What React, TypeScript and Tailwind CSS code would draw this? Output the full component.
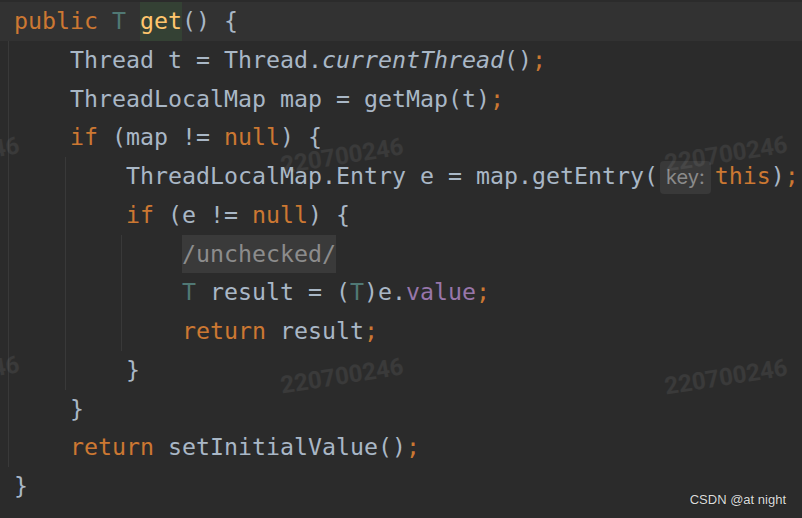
import type { ReactNode } from "react"

const Line = ({ children, className = "" }: { children?: ReactNode; className?: string }) => (
    <div className={`h-[38.75px] leading-[38.75px] whitespace-pre ${className}`}>{children}</div>
)

const Kw = ({ children }: { children: ReactNode }) => <span className="text-[#cc7832]">{children}</span>
const Tp = ({ children }: { children: ReactNode }) => <span className="text-[#507874]">{children}</span>

const Watermark = ({ className }: { className: string }) => (
    <div
        className={`pointer-events-none absolute w-[130px] text-center leading-[30px] font-['Roboto',sans-serif] text-[24px] font-bold text-white/[0.07] -rotate-[9deg] ${className}`}
    >
        220700246
    </div>
)

export default function App() {
    return (
        <div className="relative w-[802px] h-[518px] overflow-hidden bg-[#2b2b2b] pt-[2px] font-['DejaVu_Sans_Mono',monospace] text-[23.25px] text-[#a9b7c6]">
            <Line className="bg-[#323232] pl-[14px]">
                <Kw>public</Kw> <Tp>T</Tp> <span className="inline-block bg-[#344134] text-[#ffc66d]">get</span>() {"{"}
            </Line>
            <div className="ml-[8px] border-l border-[#393939] pl-[61px]">
                <Line>
                    Thread t = Thread.<span className="italic">currentThread</span>()<Kw>;</Kw>
                </Line>
                <Line>
                    ThreadLocalMap map = getMap(t)<Kw>;</Kw>
                </Line>
                <Line>
                    <Kw>if</Kw> (map != <Kw>null</Kw>) {"{"}
                </Line>
                <div className="-ml-[5px] border-l border-[#393939] pl-[60px]">
                    <Line>
                        ThreadLocalMap.Entry e = map.getEntry(
                        <span className="ml-[2px] mr-[4px] inline-block h-[33px] rounded-[4px] bg-[#393939] px-[6px] align-middle font-['Inter',sans-serif] text-[20px] leading-[33px] text-[#8a8a8a]">
                            key:
                        </span>
                        <Kw>this</Kw>)<Kw>;</Kw>
                    </Line>
                    <Line>
                        <Kw>if</Kw> (e != <Kw>null</Kw>) {"{"}
                    </Line>
                    <div className="-ml-[5px] border-l border-[#393939] pl-[60px]">
                        <Line>
                            <span className="inline-block bg-[#3a3a3a] text-[#8c8c8c]">/unchecked/</span>
                        </Line>
                        <Line>
                            <Tp>T</Tp> result = (<Tp>T</Tp>)e.<span className="text-[#9876aa]">value</span><Kw>;</Kw>
                        </Line>
                        <Line>
                            <Kw>return</Kw> result<Kw>;</Kw>
                        </Line>
                    </div>
                    <Line>{"}"}</Line>
                </div>
                <Line>{"}"}</Line>
                <Line>
                    <Kw>return</Kw> setInitialValue()<Kw>;</Kw>
                </Line>
            </div>
            <Line className="pl-[14px]">{"}"}</Line>

            <Watermark className="left-[277px] top-[141px]" />
            <Watermark className="left-[661px] top-[139px]" />
            <Watermark className="left-[277px] top-[361px]" />
            <Watermark className="left-[661px] top-[362px]" />
            <Watermark className="-left-[107px] top-[140px]" />
            <Watermark className="-left-[107px] top-[359px]" />

            <div className="absolute right-[16px] bottom-[10px] font-['Liberation_Sans',sans-serif] text-[13px] leading-[16px] text-[#dcdcdc] [text-shadow:0_0_1px_rgba(0,0,0,0.7)]">
                CSDN @at night
            </div>
        </div>
    )
}
